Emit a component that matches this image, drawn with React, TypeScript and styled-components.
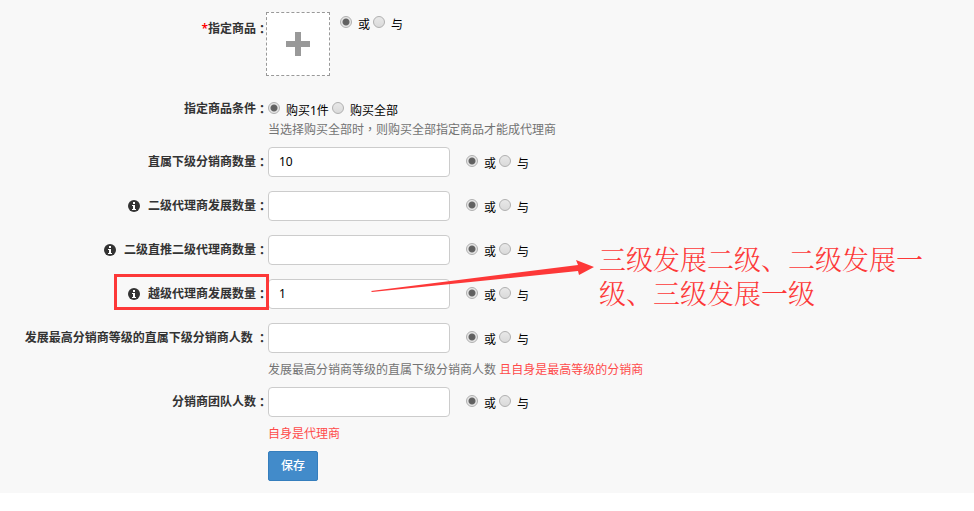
import React, { useId } from "react";
import styled, { createGlobalStyle, css } from "styled-components";

const GlobalStyle = createGlobalStyle`
  * { box-sizing: border-box; }
  body {
    margin: 0;
    background: #fff;
    color: #000;
    font: 12px/18px "Noto Sans", "Noto Sans CJK SC", sans-serif;
  }
`;

const Form = styled.form`
  position: relative;
  display: flex;
  flex-direction: column;
  gap: 14px;
  padding: 12px 0;
  background: #f8f8f8;
`;

const Row = styled.div<{ $spacing?: "loose" | "tight" }>`
  position: relative;
  display: grid;
  grid-template-columns: 268px 1fr;
  ${(p) => p.$spacing === "loose" && "margin-bottom: 10px;"}
  ${(p) => p.$spacing === "tight" && "margin-bottom: -6px;"}
`;

const labelText = css<{ $plain?: boolean }>`
  display: flex;
  align-items: center;
  justify-content: flex-end;
  height: ${(p) => (p.$plain ? "18px" : "30px")};
  color: #333;
  font-weight: 600;
  white-space: pre;
`;

const FieldLabel = styled.label`
  ${labelText}
`;

const GroupLabel = styled.span`
  ${labelText}
`;

const TopGroupLabel = styled(GroupLabel)`
  margin-top: 2px;
`;

const Required = styled.span`
  color: #f00;
`;

const CenteredMark = styled.span`
  font-family: "Noto Sans CJK TC", sans-serif;
`;

const InfoIcon = styled.svg`
  width: 12px;
  height: 12px;
  margin-right: 8px;
`;

const Controls = styled.div`
  display: flex;
  align-items: center;
  gap: 16px;
`;

const TopControls = styled(Controls)`
  align-items: flex-start;
  gap: 10px;
  margin-left: -2px;
`;

const AddButton = styled.button`
  display: grid;
  place-items: center;
  width: 64px;
  height: 64px;
  padding: 0;
  border: 1px dashed #999;
  background: #fff;
`;

const TextInput = styled.input`
  width: 182px;
  height: 30px;
  padding: 0 10px 2px;
  border: 1px solid #ccc;
  border-radius: 4px;
  background: #fff;
  color: #000;
  font: inherit;
`;

const Choices = styled.div`
  display: flex;
  gap: 3px;
`;

const ConditionBody = styled.div`
  margin-top: -2px;
`;

const Choice = styled.label`
  display: flex;
  align-items: flex-start;
  gap: 6px;
  padding-top: 4px;
`;

const Radio = styled.input`
  appearance: none;
  width: 12px;
  height: 12px;
  margin: 0;
  border: 1px solid #b0b0b0;
  border-radius: 50%;
  background: linear-gradient(#e8e8e8, #dadada);

  &:checked {
    background: radial-gradient(circle, #606060 0 2px, #666 3px, #e6e6e6 4px);
  }
`;

const Help = styled.p`
  margin: 0;
  color: #737373;
`;

const FieldHelp = styled(Help)`
  margin-top: 8px;
`;

const Warning = styled.span`
  color: #ff4a4a;
`;

const SaveButton = styled.button`
  justify-self: start;
  grid-column: 2;
  width: 50px;
  height: 30px;
  padding: 0;
  border: 1px solid #357ebd;
  border-radius: 2px;
  background: #428bca;
  color: #fff;
  font: inherit;
  font-weight: 500;
`;

const Highlight = styled.div`
  position: absolute;
  left: 114px;
  top: -5px;
  width: 155px;
  height: 36px;
  border: 3px solid #fd3838;
  pointer-events: none;
`;

const Arrow = styled.svg`
  position: absolute;
  left: 370px;
  top: -20px;
  width: 226px;
  height: 38px;
  pointer-events: none;
`;

const Note = styled.p`
  position: absolute;
  left: 599px;
  top: -37px;
  width: 330px;
  margin: 0;
  color: #fd3838;
  font: 300 27px/34px "Noto Serif CJK SC", "Noto Sans CJK SC", sans-serif;
  pointer-events: none;
`;

function Colon() {
  return <CenteredMark>：</CenteredMark>;
}

function Info() {
  return (
    <InfoIcon viewBox="0 0 12 12" aria-hidden="true">
      <circle cx="6" cy="6" r="6" fill="#333" />
      <path d="M5 2h2v2H5zM4 5h3v4h1v1H4V9h1V6H4z" fill="#fff" />
    </InfoIcon>
  );
}

function RadioPair({ options = ["或", "与"], label }: { options?: string[]; label: string }) {
  const name = useId();
  return (
    <Choices role="radiogroup" aria-label={label}>
      {options.map((option, i) => (
        <Choice key={option}>
          <Radio type="radio" name={name} defaultChecked={i === 0} />
          <span>{option}</span>
        </Choice>
      ))}
    </Choices>
  );
}

interface FieldProps {
  label: string;
  value?: string;
  info?: boolean;
  spacing?: "loose" | "tight";
  help?: React.ReactNode;
  children?: React.ReactNode;
}

function Field({ label, value = "", info, spacing, help, children }: FieldProps) {
  const id = useId();
  return (
    <Row $spacing={spacing}>
      <FieldLabel htmlFor={id}>
        {info && <Info />}
        {label}
        <Colon />
      </FieldLabel>
      <div>
        <Controls>
          <TextInput id={id} type="text" defaultValue={value} />
          <RadioPair label={label} />
        </Controls>
        {help && <FieldHelp>{help}</FieldHelp>}
      </div>
      {children}
    </Row>
  );
}

export default function App() {
  return (
    <>
      <GlobalStyle />
      <Form onSubmit={(e) => e.preventDefault()}>
        <Row $spacing="loose">
          <TopGroupLabel>
            <Required>*</Required>指定商品
            <Colon />
          </TopGroupLabel>
          <TopControls>
            <AddButton type="button" aria-label="指定商品">
              <svg width="24" height="24" viewBox="0 0 24 24" aria-hidden="true">
                <path d="M9 0h6v9h9v6h-9v9H9v-9H0V9h9z" fill="#999" />
              </svg>
            </AddButton>
            <RadioPair label="指定商品" />
          </TopControls>
        </Row>
        <Row $spacing="tight">
          <GroupLabel $plain>
            指定商品条件
            <Colon />
          </GroupLabel>
          <ConditionBody>
            <RadioPair label="指定商品条件" options={["购买1件", "购买全部"]} />
            <Help>
              当选择购买全部时<CenteredMark>，</CenteredMark>则购买全部指定商品才能成代理商
            </Help>
          </ConditionBody>
        </Row>
        <Field label="直属下级分销商数量" value="10" />
        <Field label="二级代理商发展数量" info />
        <Field label="二级直推二级代理商数量" info />
        <Field label="越级代理商发展数量" value="1" info>
          <Highlight />
          <Arrow viewBox="0 0 226 38" aria-hidden="true">
            <path d="M1 32 L208 6 L206 1 L224 8 L209 16 L208 12 L2 33 Z" fill="#fd3838" />
          </Arrow>
          <Note>三级发展二级、二级发展一级、三级发展一级</Note>
        </Field>
        <Field
          label="发展最高分销商等级的直属下级分销商人数 "
          spacing="tight"
          help={
            <>
              发展最高分销商等级的直属下级分销商人数 <Warning>且自身是最高等级的分销商</Warning>
            </>
          }
        />
        <Field label="分销商团队人数" spacing="tight" help={<Warning>自身是代理商</Warning>} />
        <Row>
          <SaveButton type="submit">保存</SaveButton>
        </Row>
      </Form>
    </>
  );
}
